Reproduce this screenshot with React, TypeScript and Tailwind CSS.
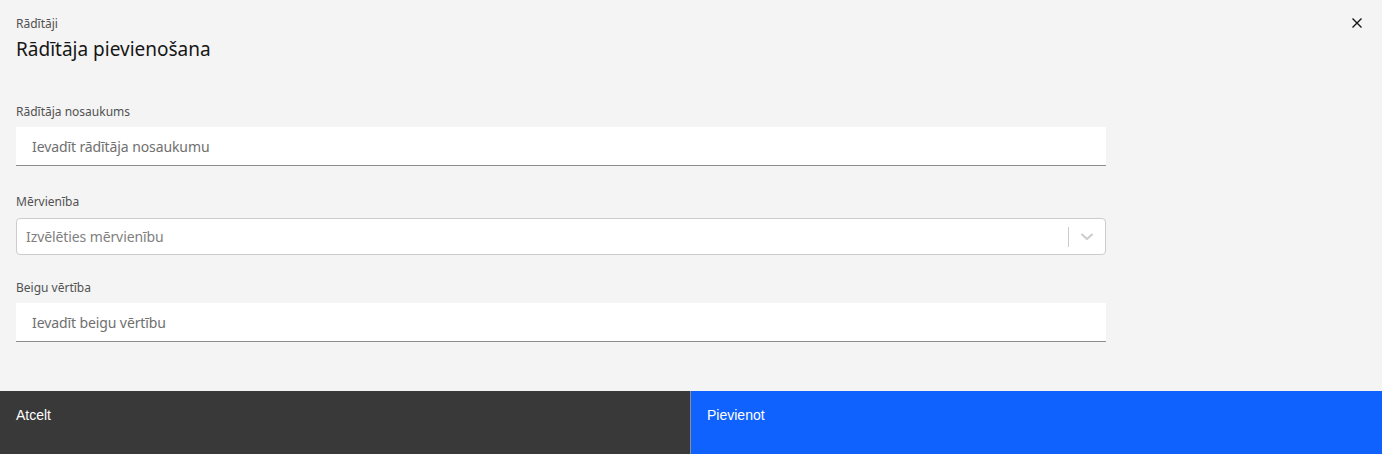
import React from "react";

const font = { fontFamily: '"Noto Sans", "Open Sans", sans-serif' };

export default function App() {
  return (
    <div className="w-[1382px] h-[454px] bg-[#f4f4f4] flex flex-col" style={font}>
      <div className="flex-1 flex flex-col px-4">
        <div className="flex justify-between">
          <div className="pt-[16px]">
            <div className="text-[12px] leading-[16px] text-[#525252]">Rādītāji</div>
            <div className="text-[19px] leading-[28px] text-[#161616] mt-[3px]">Rādītāja pievienošana</div>
          </div>
          <button className="mt-[15px] mr-[1px] w-4 h-4 flex items-center justify-center text-[#161616]">
            <svg width="16" height="16" viewBox="0 0 16 16" fill="none" stroke="currentColor" strokeWidth="1.4">
              <path d="M3.5 3.5 L12.5 12.5 M12.5 3.5 L3.5 12.5" />
            </svg>
          </button>
        </div>

        <div className="w-[1090px] mt-[41px] flex flex-col">
          <label className="text-[12px] leading-[16px] text-[#525252]">Rādītāja nosaukums</label>
          <div className="mt-[7px] h-[39px] bg-white border-b border-[#8d8d8d] flex items-center px-4 text-[14px] text-[#6f6f6f] tracking-[-0.1px]">
            Ievadīt rādītāja nosaukumu
          </div>

          <label className="mt-[28px] text-[12px] leading-[16px] text-[#525252]">Mērvienība</label>
          <div className="mt-[8px] h-[37px] bg-white border border-[#cccccc] rounded-[4px] flex items-center pl-[9px] text-[14px] text-[#808080] tracking-[-0.1px]">
            <span className="flex-1">Izvēlēties mērvienību</span>
            <div className="w-px h-[20px] bg-[#cccccc]" />
            <div className="w-[36px] flex items-center justify-center text-[#cccccc]">
              <svg width="14" height="10" viewBox="0 0 14 10" fill="none" stroke="currentColor" strokeWidth="2" strokeLinecap="round" strokeLinejoin="round">
                <path d="M2 2.5 L7 7 L12 2.5" />
              </svg>
            </div>
          </div>

          <label className="mt-[25px] text-[12px] leading-[16px] text-[#525252]">Beigu vērtība</label>
          <div className="mt-[7px] h-[39px] bg-white border-b border-[#8d8d8d] flex items-center px-4 text-[14px] text-[#6f6f6f] tracking-[-0.1px]">
            Ievadīt beigu vērtību
          </div>
        </div>
      </div>

      <div className="h-[63px] flex" style={{ fontFamily: '"Liberation Sans", Arial, sans-serif' }}>
        <button className="w-[691px] bg-[#393939] text-white text-[14px] text-left px-4 pt-[14px] flex items-start border-r border-[#8d8d8d]">
          Atcelt
        </button>
        <button className="flex-1 bg-[#0f62fe] text-white text-[14px] text-left px-4 pt-[14px] flex items-start">
          Pievienot
        </button>
      </div>
    </div>
  );
}
